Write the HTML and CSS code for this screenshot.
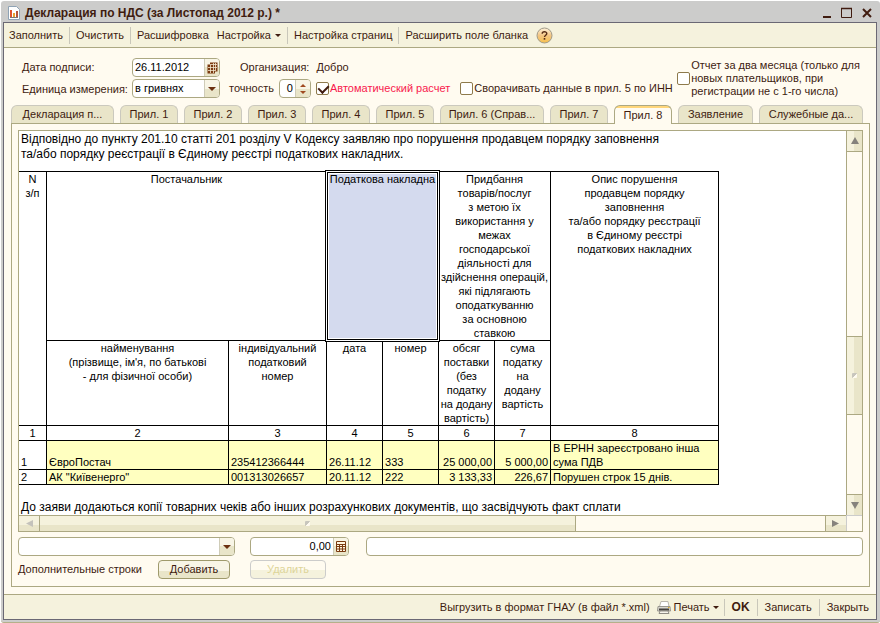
FILE: index.html
```
<!DOCTYPE html>
<html lang="ru">
<head>
    <meta charset="UTF-8">
    <meta name="viewport" content="width=device-width, initial-scale=1.0">
    <title>Декларация по НДС</title>
    <link rel="stylesheet" href="styles.css">
</head>
<body>
    <div class="window">
        <div class="titlebar">
            <svg class="title-icon" width="12" height="14" viewBox="0 0 12 14">
                <path d="M.5.5h8l3 3v10H.5z" fill="#fff" stroke="#8fa3b5"/>
                <path d="M3 4v7" stroke="#e0522d" stroke-width="2"/>
                <path d="M6 7v4" stroke="#e8a22f" stroke-width="2"/>
                <path d="M9 5v6" stroke="#b5543a" stroke-width="2"/>
                <path d="M2 11.5h8" stroke="#777"/>
            </svg>
            <h1 class="title">Декларация по НДС (за Листопад 2012 р.) *</h1>
            <div class="window-buttons">
                <button type="button" aria-label="Свернуть"><svg width="12" height="12" viewBox="0 0 12 12"><path d="M2 10h8" stroke="#401c10" stroke-width="2"/></svg></button>
                <button type="button" aria-label="Развернуть"><svg width="12" height="12" viewBox="0 0 12 12"><path d="M.5 1.5h10v9H.5z" fill="none" stroke="#401c10"/><path d="M0 1.500h11" stroke="#401c10" stroke-width="1.500"/></svg></button>
                <button type="button" aria-label="Закрыть окно"><svg width="12" height="12" viewBox="0 0 12 12"><path d="M2 2l8 8M10 2l-8 8" stroke="#401c10" stroke-width="2"/></svg></button>
            </div>
        </div>

        <div class="client">
            <div class="toolbar">
                <button type="button">Заполнить</button>
                <span class="sep"></span>
                <button type="button">Очистить</button>
                <span class="sep"></span>
                <button type="button">Расшифровка</button>
                <button type="button" class="with-arrow">Настройка <span class="arrow"></span></button>
                <span class="sep"></span>
                <button type="button">Настройка страниц</button>
                <span class="sep"></span>
                <button type="button">Расширить поле бланка</button>
                <button type="button" class="help" aria-label="Справка">
                    <svg width="17" height="17" viewBox="0 0 17 17">
                        <defs>
                            <linearGradient id="helpFill" x1="0" y1="0" x2="0" y2="1">
                                <stop offset="0" stop-color="#fff3dc"/>
                                <stop offset=".5" stop-color="#f3c684"/>
                                <stop offset="1" stop-color="#f7c04c"/>
                            </linearGradient>
                        </defs>
                        <circle cx="8.500" cy="8.500" r="7.500" fill="url(#helpFill)" stroke="#a09a88"/>
                        <path d="M6.200 6.800C6.200 4.200 10.800 4.200 10.800 6.500 10.800 8.200 8.500 8.200 8.500 10" fill="none" stroke="#5a2f16" stroke-width="1.400"/>
                        <path d="M8.500 11v1.700" stroke="#5a2f16" stroke-width="1.600"/>
                    </svg>
                </button>
            </div>

            <div class="params">
                <div class="param-labels">
                    <label for="signDate">Дата подписи:</label>
                    <label for="unit">Единица измерения:</label>
                </div>
                <div class="param-main">
                    <div class="param-row">
                        <div class="field date-field">
                            <input type="text" id="signDate" value="26.11.2012">
                            <button type="button" class="field-btn" aria-label="Календарь">
                                <svg width="11" height="12" viewBox="0 0 11 12"><path d="M3 .5h7.500v9H8v2H.5v-9H3z" fill="#7a3a10"/><path d="M1 5.500h9M1 8.500h7M3.500 3v8M6.500 1v10M8.500 1v8M3 2.500h7" stroke="#f4ead0" stroke-width=".8"/></svg>
                            </button>
                        </div>
                        <span class="org">Организация:</span>
                        <span class="org-name">Добро</span>
                    </div>
                    <div class="param-row">
                        <div class="field unit-field">
                            <select id="unit"><option>в гривнях</option></select>
                            <span class="field-btn"><span class="arrow big"></span></span>
                        </div>
                        <label for="precision" class="precision-label">точность</label>
                        <div class="field precision-field">
                            <input type="text" id="precision" value="0">
                            <span class="field-btn spin"><span class="arrow up"></span><span class="arrow"></span></span>
                        </div>
                        <label class="check auto"><input type="checkbox" checked> Автоматический расчет</label>
                        <label class="check"><input type="checkbox"> Сворачивать данные в прил. 5 по ИНН</label>
                    </div>
                </div>
                <label class="check two-months"><input type="checkbox"> <span>Отчет за два месяца (только для<br>новых плательщиков, при<br>регистрации не с 1-го числа)</span></label>
            </div>

            <div class="tabs" role="tablist">
                <button type="button" role="tab" class="tab first">Декларация п...</button>
                <button type="button" role="tab" class="tab">Прил. 1</button>
                <button type="button" role="tab" class="tab">Прил. 2</button>
                <button type="button" role="tab" class="tab">Прил. 3</button>
                <button type="button" role="tab" class="tab">Прил. 4</button>
                <button type="button" role="tab" class="tab">Прил. 5</button>
                <button type="button" role="tab" class="tab wide">Прил. 6 (Справ...</button>
                <button type="button" role="tab" class="tab">Прил. 7</button>
                <button type="button" role="tab" class="tab active" aria-selected="true">Прил. 8</button>
                <button type="button" role="tab" class="tab medium">Заявление</button>
                <button type="button" role="tab" class="tab wide">Служебные да...</button>
            </div>

            <div class="panel">
                <div class="sheet">
                    <div class="sheet-body">
                        <p class="sheet-text">Відповідно до пункту 201.10 статті 201 розділу V Кодексу заявляю про порушення продавцем порядку заповнення<br>та/або порядку реєстрації в Єдиному реєстрі податкових накладних.</p>
                        <table class="report">
                            <colgroup>
                                <col class="c-num"><col class="c-name"><col class="c-code">
                                <col class="c-small"><col class="c-small"><col class="c-small"><col class="c-small">
                                <col class="c-desc">
                            </colgroup>
                            <thead>
                                <tr>
                                    <th rowspan="2">N<br>з/п</th>
                                    <th colspan="2">Постачальник</th>
                                    <th colspan="2" class="selected">Податкова накладна</th>
                                    <th colspan="2">Придбання<br>товарів/послуг<br>з метою їх<br>використання у<br>межах<br>господарської<br>діяльності для<br>здійснення операцій,<br>які підлягають<br>оподаткуванню<br>за основною<br>ставкою</th>
                                    <th rowspan="2">Опис порушення<br>продавцем порядку<br>заповнення<br>та/або порядку реєстрації<br>в Єдиному реєстрі<br>податкових накладних</th>
                                </tr>
                                <tr>
                                    <th>найменування<br>(прізвище, ім'я, по батькові<br>- для фізичної особи)</th>
                                    <th>індивідуальний<br>податковий<br>номер</th>
                                    <th>дата</th>
                                    <th>номер</th>
                                    <th>обсяг<br>поставки<br>(без<br>податку<br>на додану<br>вартість)</th>
                                    <th>сума<br>податку<br>на<br>додану<br>вартість</th>
                                </tr>
                                <tr>
                                    <th>1</th><th>2</th><th>3</th><th>4</th><th>5</th><th>6</th><th>7</th><th>8</th>
                                </tr>
                            </thead>
                            <tbody>
                                <tr>
                                    <td>1</td>
                                    <td>ЄвроПостач</td>
                                    <td>235412366444</td>
                                    <td>26.11.12</td>
                                    <td>333</td>
                                    <td class="num">25 000,00</td>
                                    <td class="num">5 000,00</td>
                                    <td>В ЕРНН зареєстровано інша<br>сума ПДВ</td>
                                </tr>
                                <tr>
                                    <td>2</td>
                                    <td>АК "Київенерго"</td>
                                    <td>001313026657</td>
                                    <td>20.11.12</td>
                                    <td>222</td>
                                    <td class="num">3 133,33</td>
                                    <td class="num">226,67</td>
                                    <td>Порушен строк 15 днів.</td>
                                </tr>
                            </tbody>
                        </table>
                        <p class="sheet-text">До заяви додаються копії товарних чеків або інших розрахункових документів, що засвідчують факт сплати</p>
                    </div>
                    <div class="scroll vertical">
                        <span class="scroll-btn"><svg width="8" height="8" viewBox="0 0 8 8"><path d="M4 0l4 7H0z" fill="#85827c"/></svg></span>
                        <span class="track-before"></span>
                        <span class="thumb"><i class="grip"></i></span>
                        <span class="track-after"></span>
                        <span class="scroll-btn"><svg width="8" height="8" viewBox="0 0 8 8"><path d="M0 1h8L4 8z" fill="#85827c"/></svg></span>
                    </div>
                    <div class="scroll horizontal">
                        <span class="scroll-btn"><svg width="8" height="8" viewBox="0 0 8 8"><path d="M8 0v7L1 3.500z" fill="#c4c2bb"/></svg></span>
                        <span class="thumb"><i class="grip"></i></span>
                        <span class="track-after"></span>
                        <span class="scroll-btn"><svg width="8" height="8" viewBox="0 0 8 8"><path d="M0 0v7l7-3.500z" fill="#85827c"/></svg></span>
                    </div>
                    <div class="scroll-corner"></div>
                </div>

                <div class="extra-row">
                    <div class="field extra-select">
                        <select aria-label="Строка"><option></option></select>
                        <span class="field-btn"><span class="arrow big"></span></span>
                    </div>
                    <div class="field amount-field">
                        <input type="text" value="0,00" aria-label="Сумма">
                        <button type="button" class="field-btn" aria-label="Калькулятор">
                            <svg width="10" height="11" viewBox="0 0 10 11"><path d="M.5.5h9v10h-9z" fill="#fff6e0" stroke="#7a3a10"/><path d="M1 3.500h8M1 5.500h8M1 8h8M3.500 4v6M6.500 4v6" stroke="#7a3a10"/></svg>
                        </button>
                    </div>
                    <div class="field comment-field"><input type="text" aria-label="Комментарий"></div>
                </div>
                <div class="extra-row">
                    <span class="extra-label">Дополнительные строки</span>
                    <button type="button" class="btn">Добавить</button>
                    <button type="button" class="btn" disabled>Удалить</button>
                </div>
            </div>

            <div class="footer">
                <button type="button">Выгрузить в формат ГНАУ (в файл *.xml)</button>
                <button type="button" class="with-arrow">
                    <svg width="14" height="13" viewBox="0 0 14 13">
                        <path d="M4 .5h7l1 5H2.500z" fill="#fff" stroke="#b9b6ad"/>
                        <path d="M1 5.500h12l.5 4.500H.5z" fill="#d8d6cf" stroke="#9a978f"/>
                        <path d="M2 8.500h10" stroke="#45423e" stroke-width="2"/>
                        <path d="M3 10h8l1 2.500H2z" fill="#f6f4ec" stroke="#8f8c84"/>
                        <path d="M11 6.500h1.500" stroke="#e0b02c"/>
                    </svg>
                    Печать <span class="arrow"></span>
                </button>
                <span class="sep"></span>
                <button type="button" class="ok">OK</button>
                <span class="sep"></span>
                <button type="button">Записать</button>
                <span class="sep"></span>
                <button type="button">Закрыть</button>
            </div>
        </div>
    </div>
</body>
</html>
```
FILE: styles.css
```
* {
    margin: 0;
    padding: 0;
    box-sizing: border-box;
}

body {
    font-family: "Liberation Sans", Arial, sans-serif;
    font-size: 11px;
    line-height: 13px;
    color: #401c10;
    background: #fff;
}

button,
input,
select {
    font: inherit;
    color: inherit;
    border: none;
    background: none;
}

button {
    white-space: nowrap;
}

.window {
    display: flex;
    flex-direction: column;
    min-height: calc(100vh - 1px);
    margin: 1px 0 0 1px;
    padding: 0 3px 2px 2px;
    background: #cccccb;
    border-bottom: 1px solid #b5b08a;
    border-radius: 3px;
}

.titlebar {
    display: flex;
    align-items: center;
    height: 21px;
    padding: 2px 4px 0 5px;
}

.title-icon {
    margin-right: 5px;
}

.title {
    flex: 1;
    font-size: 12px;
    line-height: 16px;
    font-weight: bold;
}

.window-buttons {
    display: flex;
    gap: 8px;
}

.window-buttons button {
    display: flex;
}

.client {
    flex: 1;
    display: flex;
    flex-direction: column;
    border: 1px solid #6a6874;
    background: #fffbf0;
}

/* command bars */
.toolbar,
.footer {
    display: flex;
    align-items: center;
    gap: 6px;
    height: 25px;
    background: #f5f2dd;
}

.toolbar {
    padding: 0 5px;
    border-bottom: 1px solid #aca882;
}

.toolbar .with-arrow,
.toolbar .help {
    margin-left: 2px;
}

.footer {
    justify-content: flex-end;
    gap: 7px;
    margin-top: 7px;
    padding: 0 7px;
    border-top: 1px solid #aca882;
}

.footer .with-arrow {
    gap: 3px;
    margin-right: -2px;
}

.sep {
    width: 1px;
    height: 17px;
    background: #c9c7ba;
}

.with-arrow {
    display: flex;
    align-items: center;
    gap: 4px;
}

.help,
.help svg {
    display: block;
}

.ok {
    font-size: 12px;
    font-weight: bold;
}

.arrow {
    border: 3px solid transparent;
    border-top-color: #401c10;
    border-bottom: none;
}

.arrow.up {
    border-top: none;
    border-bottom: 3px solid #a04a20;
}

.arrow.big {
    border-width: 4px 4px 0;
    border-top-color: #6b3010;
}

/* document parameters */
.params {
    display: flex;
    padding: 10px 16px 0 18px;
    white-space: nowrap;
}

.param-labels {
    display: flex;
    flex-direction: column;
    width: 110px;
    line-height: 18px;
    gap: 4px;
}

.param-main {
    display: flex;
    flex-direction: column;
    gap: 2px;
}

.param-row {
    display: flex;
    align-items: center;
}

.field {
    display: flex;
    height: 19px;
    overflow: hidden;
    background: #fff;
    border: 1px solid #aca882;
    border-radius: 4px;
    color: #000;
}

.field input,
.field select {
    flex: 1;
    min-width: 0;
    padding: 0 2px;
    appearance: none;
    outline: none;
}

.field-btn {
    display: flex;
    align-items: center;
    justify-content: center;
    width: 15px;
    background: linear-gradient(#f8f5e6 50%, #e9e5c9 50%);
    border-left: 1px solid #cfccb8;
}

.field-btn.spin {
    flex-direction: column;
    gap: 4px;
}

.spin .arrow {
    border-top-color: #a04a20;
}

.date-field,
.unit-field {
    width: 88px;
}

.org {
    margin-left: 20px;
}

.org-name {
    margin-left: 7px;
}

.precision-label {
    margin-left: 9px;
}

.precision-field {
    width: 32px;
    margin: 0 5px;
}

.precision-field input {
    text-align: right;
}

.check {
    display: flex;
    align-items: center;
    gap: 1px;
}

.check input {
    position: relative;
    flex: none;
    width: 13px;
    height: 13px;
    appearance: none;
    background: #fff;
    border: 1px solid #8e7a4c;
    border-radius: 2px;
}

.check input:checked::after {
    content: "";
    position: absolute;
    left: 3px;
    top: 0;
    width: 5px;
    height: 8px;
    border: solid #401c10;
    border-width: 0 2px 2px 0;
    transform: rotate(45deg);
}

.auto {
    margin-right: 10px;
    color: #f8194d;
}

.two-months {
    margin-left: auto;
}

/* tabs */
.tabs {
    display: flex;
    gap: 6px;
    margin: 7px 0 0 7px;
}

.tab {
    width: 58px;
    height: 18px;
    background: #e9e5c9;
    border: 1px solid #cbc9be;
    border-bottom: none;
    border-radius: 6px 6px 0 0;
}

.tab.first {
    width: 103px;
}

.tab.medium {
    width: 75px;
}

.tab.wide {
    width: 104px;
}

.tab.active {
    z-index: 1;
    height: 19px;
    margin-bottom: -1px;
    background: linear-gradient(#ffd67a 2px, #fffbf0 2px);
    border-color: #aca882;
}

.panel {
    flex: 1;
    display: flex;
    flex-direction: column;
    gap: 4px;
    margin: 0 6px 0 7px;
    padding: 6px 6px 7px;
    border: 1px solid #aca882;
}

/* spreadsheet */
.sheet {
    flex: 1;
    display: grid;
    grid-template-columns: 1fr 16px;
    grid-template-rows: 1fr 16px;
    margin-bottom: 1px;
    border: 1px solid #aca882;
}

.sheet-body {
    overflow: hidden;
    background: #fff;
    color: #000;
}

.sheet-text {
    padding: 1px 0 0 2px;
    font-size: 12px;
    line-height: 15px;
    white-space: nowrap;
}

.report {
    width: 700px;
    margin: 9px 0 14px;
    table-layout: fixed;
    border-collapse: separate;
    border-spacing: 0;
    border-top: 1px solid #000;
    line-height: 14px;
}

.c-num { width: 28px; }
.c-name { width: 182px; }
.c-code { width: 98px; }
.c-small { width: 56px; }
.c-desc { width: 168px; }

.report th,
.report td {
    border-right: 1px solid #000;
    border-bottom: 1px solid #000;
    white-space: nowrap;
}

.report th {
    font-weight: normal;
    text-align: center;
    vertical-align: top;
}

.report td {
    padding: 0 2px;
    vertical-align: bottom;
    background: #ffffc0;
}

.report td:first-child {
    background: #fff;
}

.report .num {
    text-align: right;
}

.report .selected {
    position: relative;
    background: #d4daee;
}

/* cell cursor: black, white, black, white frame */
.report .selected::after {
    content: "";
    position: absolute;
    inset: -2px;
    border: 1px solid #000;
    box-shadow: inset 0 0 0 1px #fff, inset 0 0 0 2px #000, inset 0 0 0 3px #fff;
}

.scroll {
    display: flex;
}

.vertical {
    flex-direction: column;
    border-left: 1px solid #aca882;
}

.horizontal {
    border-top: 1px solid #aca882;
}

.scroll-btn,
.thumb {
    display: flex;
    align-items: center;
    justify-content: center;
}

.scroll-btn {
    flex: 0 0 21px;
}

.vertical .scroll-btn,
.vertical .thumb {
    background: linear-gradient(90deg, #f5f2dd 50%, #e9e5c9 50%);
    border-bottom: 1px solid #aca882;
}

.vertical .scroll-btn:last-child {
    border-top: 1px solid #aca882;
    border-bottom: none;
}

.vertical .track-before { flex: 185; }
.vertical .thumb { flex: 78; border-top: 1px solid #aca882; }
.vertical .track-after { flex: 79; }

.horizontal .scroll-btn,
.horizontal .thumb {
    background: linear-gradient(#f5f2dd 60%, #e9e5c9 60%);
    border-right: 1px solid #aca882;
}

.horizontal .scroll-btn:last-child {
    border-left: 1px solid #aca882;
    border-right: none;
}

.horizontal .thumb { flex: 536; }
.horizontal .track-after { flex: 249; }

.grip {
    width: 5px;
    height: 5px;
    border-radius: 1px;
    background: linear-gradient(135deg, #c8c6bd 55%, #fffbf0 55%);
}

.scroll-corner {
    border-left: 1px solid #cccccb;
    border-top: 1px solid #cccccb;
}

/* additional rows */
.extra-row {
    display: flex;
    align-items: center;
}

.extra-select {
    width: 217px;
    margin-right: 15px;
}

.amount-field {
    width: 99px;
    margin-right: 17px;
}

.amount-field input {
    text-align: right;
}

.comment-field {
    flex: 1;
}

.extra-label {
    width: 140px;
}

.btn {
    width: 72px;
    height: 19px;
    background: linear-gradient(#f8f5e6 60%, #e9e5c9 60%);
    border: 1px solid #9f9a6c;
    border-radius: 4px;
}

.btn:disabled {
    width: 76px;
    margin-left: 20px;
    color: #ddd59a;
    background: linear-gradient(#fffbf0 50%, #f5f2dd 50%);
    border-color: #cccccb;
}
```
